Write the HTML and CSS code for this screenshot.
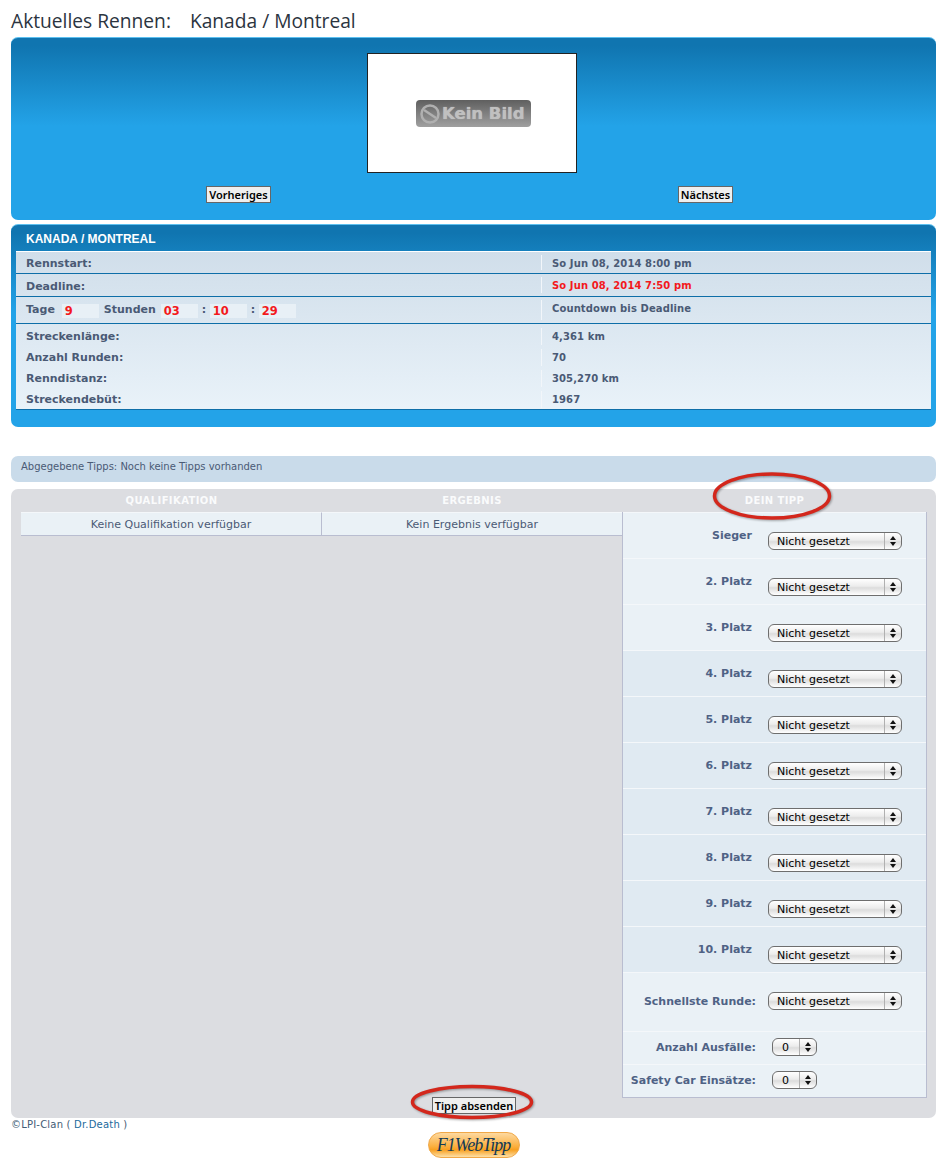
FILE: index.html
```html
<!DOCTYPE html>
<html>
    <head>
        <meta charset="utf-8">
        <title>Aktuelles Rennen</title>
        <link rel="stylesheet" href="styles.css">
    </head>
    <body>
        <h1 class="title"><span>Aktuelles Rennen:</span><span>Kanada / Montreal</span></h1>

        <div class="panel pic_panel">
            <div class="pic_box">
                <div class="no_pic">
                    <svg width="22" height="22" viewBox="0 0 22 22">
                        <circle cx="11" cy="11" r="8.5" fill="none" stroke="#b0b0b0" stroke-width="2.5"/>
                        <path d="M5 7 L17 15" stroke="#b0b0b0" stroke-width="2.5"/>
                    </svg>
                    <span>Kein Bild</span>
                </div>
            </div>
            <div class="pic_nav">
                <div><button class="btn">Vorheriges</button></div>
                <div><button class="btn">Nächstes</button></div>
            </div>
        </div>

        <div class="panel info_panel">
            <div class="info_head">KANADA / MONTREAL</div>
            <div class="info_table">
                <div class="row main h22">
                    <div class="lbl">Rennstart:</div>
                    <div class="val">So Jun 08, 2014 8:00 pm</div>
                </div>
                <div class="row main h23">
                    <div class="lbl">Deadline:</div>
                    <div class="val red">So Jun 08, 2014 7:50 pm</div>
                </div>
                <div class="row main h27">
                    <div class="lbl count">
                        <span>Tage</span><b class="num">9</b>
                        <span class="gap">Stunden</span><b class="num">03</b>
                        <span class="sep">:</span><b class="num">10</b>
                        <span class="sep">:</span><b class="num">29</b>
                    </div>
                    <div class="val">Countdown bis Deadline</div>
                </div>
                <div class="facts">
                    <div class="row">
                        <div class="lbl">Streckenlänge:</div>
                        <div class="val">4,361 km</div>
                    </div>
                    <div class="row">
                        <div class="lbl">Anzahl Runden:</div>
                        <div class="val">70</div>
                    </div>
                    <div class="row">
                        <div class="lbl">Renndistanz:</div>
                        <div class="val">305,270 km</div>
                    </div>
                    <div class="row">
                        <div class="lbl">Streckendebüt:</div>
                        <div class="val">1967</div>
                    </div>
                </div>
            </div>
        </div>

        <div class="tips_bar">Abgegebene Tipps: Noch keine Tipps vorhanden</div>

        <div class="tip_panel">
            <div class="tip_grid">
                <div class="col_head">QUALIFIKATION</div>
                <div class="col_head">ERGEBNIS</div>
                <div class="col_head">DEIN TIPP</div>
                <div class="cell">Keine Qualifikation verfügbar</div>
                <div class="cell cell2">Kein Ergebnis verfügbar</div>
                <div class="tip_col">
                    <div class="tip_row"><label>Sieger</label><span class="sel"><select><option>Nicht gesetzt</option></select></span></div>
                    <div class="tip_row"><label>2. Platz</label><span class="sel"><select><option>Nicht gesetzt</option></select></span></div>
                    <div class="tip_row"><label>3. Platz</label><span class="sel"><select><option>Nicht gesetzt</option></select></span></div>
                    <div class="tip_row dark"><label>4. Platz</label><span class="sel"><select><option>Nicht gesetzt</option></select></span></div>
                    <div class="tip_row dark"><label>5. Platz</label><span class="sel"><select><option>Nicht gesetzt</option></select></span></div>
                    <div class="tip_row dark"><label>6. Platz</label><span class="sel"><select><option>Nicht gesetzt</option></select></span></div>
                    <div class="tip_row dark"><label>7. Platz</label><span class="sel"><select><option>Nicht gesetzt</option></select></span></div>
                    <div class="tip_row dark"><label>8. Platz</label><span class="sel"><select><option>Nicht gesetzt</option></select></span></div>
                    <div class="tip_row dark"><label>9. Platz</label><span class="sel"><select><option>Nicht gesetzt</option></select></span></div>
                    <div class="tip_row dark"><label>10. Platz</label><span class="sel"><select><option>Nicht gesetzt</option></select></span></div>
                    <div class="tip_row extra fast"><label>Schnellste Runde:</label><span class="sel"><select><option>Nicht gesetzt</option></select></span></div>
                    <div class="tip_row extra small"><label>Anzahl Ausfälle:</label><span class="sel num_sel"><select><option>0</option></select></span></div>
                    <div class="tip_row extra small"><label>Safety Car Einsätze:</label><span class="sel num_sel"><select><option>0</option></select></span></div>
                </div>
            </div>
            <div class="submit_row"><button class="btn">Tipp absenden</button></div>

            <!-- red marks drawn over the page -->
            <svg class="mark mark_tipp" width="124" height="52" viewBox="0 0 124 52">
                <ellipse cx="62" cy="26" rx="57.5" ry="22" fill="none" stroke="#d3271c" stroke-width="3.5"/>
            </svg>
            <svg class="mark mark_send" width="126" height="40" viewBox="0 0 126 40">
                <ellipse cx="63" cy="20" rx="59.5" ry="15.5" fill="none" stroke="#d3271c" stroke-width="3.5"/>
            </svg>
        </div>

        <div class="copy">©LPI-Clan ( <a href="#">Dr.Death</a> )</div>
        <div class="logo_row"><div class="logo">F1WebTipp</div></div>
    </body>
</html>
```

FILE: styles.css
```css
html, body {
    margin: 0;
    padding: 0;
}

body {
    padding: 0 8px 0 11px;
    background-color: #fff;
    font-family: "DejaVu Sans", sans-serif;
    font-size: 11px;
    color: #4a5a75;
}

.title {
    margin: 0;
    height: 37px;
    line-height: 41px;
    font-family: "Open Sans", sans-serif;
    font-size: 19.2px;
    font-weight: 500;
    color: #2b3440;
}

.title span + span {
    margin-left: 19px;
}

.panel {
    border-top: 1px solid #5cc0f0;
    border-radius: 7px;
    box-sizing: border-box;
    background: linear-gradient(#1075b0 0, #1075b0 8px, #23a3e8 88px);
}

.pic_panel {
    height: 183px;
    padding-top: 15px;
}

.pic_box {
    box-sizing: border-box;
    width: 210px;
    height: 120px;
    margin-left: 356px;
    padding-left: 48px;
    padding-top: 46px;
    background-color: #fff;
    border: 1px solid #222;
}

.no_pic {
    display: flex;
    align-items: center;
    gap: 1px;
    box-sizing: border-box;
    width: 115px;
    height: 27px;
    padding-left: 3px;
    border-radius: 4px;
    background: linear-gradient(#5f5f5f, #a0a0a0);
    font-size: 16.5px;
    font-weight: bold;
    color: #c0c0c0;
    text-shadow: 0 0 1px #c0c0c0;
    white-space: nowrap;
}

.pic_nav {
    display: grid;
    grid-template-columns: 455px 455px;
    gap: 12px;
    margin-top: 13px;
    text-align: center;
}

.btn {
    height: 17px;
    padding: 0 2px;
    border: 1px solid #666;
    border-radius: 0;
    background-color: #efefef;
    font-family: "Noto Sans", sans-serif;
    font-size: 11px;
    font-weight: 600;
    line-height: 14px;
    color: #000;
}

.info_panel {
    height: 203px;
    margin-top: 4px;
    padding: 0 5px;
}

.info_head {
    height: 26px;
    padding-left: 10px;
    line-height: 29px;
    font-family: "Liberation Sans", sans-serif;
    font-size: 12px;
    font-weight: bold;
    color: #fff;
}

.info_table {
    border-top: 1px solid #fff;
    border-bottom: 1px solid #0e6ea8;
    background: linear-gradient(#d0deea, #e9f2f9);
}

.row {
    display: flex;
    height: 21px;
    font-weight: bold;
    line-height: 21px;
}

.row .lbl {
    box-sizing: border-box;
    width: 525px;
    padding-left: 10px;
    white-space: nowrap;
}

.row .val {
    flex: 1;
    margin: 2px 0;
    padding-left: 10px;
    border-left: 1px solid #f2f6fa;
    font-size: 10px;
    letter-spacing: 0.1px;
    line-height: 17px;
}

.main {
    box-sizing: border-box;
    border-bottom: 1px solid #0e6ea8;
}

.h22 {
    height: 22px;
}

.h23 {
    height: 23px;
}

.h27 {
    height: 27px;
}

.main .val {
    margin: 3px 0;
}

.red {
    color: #f3191c;
}

.main .lbl {
    line-height: 23px;
}

.h23 .lbl,
.h27 .lbl {
    padding-top: 1px;
}

.count {
    display: flex;
    align-items: center;
    height: 24px;
}

.count .num {
    box-sizing: border-box;
    width: 37px;
    height: 14px;
    margin-top: 3px;
    margin-left: 7px;
    padding-left: 3px;
    background-color: #e8f0f6;
    font-size: 11.5px;
    line-height: 15px;
    color: #f3191c;
}

.count .gap {
    margin-left: 5px;
}

.count .gap + .num {
    margin-left: 5px;
}

.count .sep {
    width: 12px;
    text-align: center;
}

.count .sep + .num {
    margin-left: 0;
}

.facts {
    box-sizing: border-box;
    height: 85px;
    padding-top: 2px;
}

.tips_bar {
    box-sizing: border-box;
    height: 26px;
    margin-top: 29px;
    padding-left: 10px;
    border-radius: 7px;
    background-color: #c9dbea;
    font-size: 10px;
    line-height: 22px;
}

.tip_panel {
    position: relative;
    box-sizing: border-box;
    height: 629px;
    margin-top: 7px;
    padding: 0 9px 0 10px;
    border-radius: 7px;
    background-color: #dcdde1;
}

.tip_grid {
    display: grid;
    grid-template-columns: 301px 300px 305px;
    grid-template-rows: 23px auto;
}

.col_head {
    text-align: center;
    font-size: 10px;
    font-weight: bold;
    letter-spacing: 0.4px;
    line-height: 23px;
    color: #fafbfc;
}

.cell {
    box-sizing: border-box;
    height: 24px;
    border-top: 1px solid #f4f7fa;
    border-bottom: 1px solid #b9bdd0;
    border-right: 1px solid #b9bdd0;
    background-color: #eaf1f6;
    text-align: center;
    font-size: 11px;
    line-height: 23px;
}

.cell2 {
    border-right: 0;
}

.tip_col {
    border-left: 1px solid #b9bdd0;
    border-right: 1px solid #b9bdd0;
    border-bottom: 1px solid #b9bdd0;
}

.tip_row {
    display: flex;
    justify-content: flex-end;
    box-sizing: border-box;
    height: 46px;
    padding: 19px 24px 0 0;
    border-top: 1px solid #f4f7fa;
    background-color: #eaf1f6;
    font-weight: bold;
}

.tip_row.dark {
    background-color: #e0eaf2;
}

.tip_row label {
    margin: -3px 16px 0 0;
    color: #4f6285;
    white-space: nowrap;
}

.tip_row.extra {
    align-items: center;
    padding-top: 0;
    padding-bottom: 2px;
}

.tip_row.extra label {
    margin: 0 12px 0 0;
}

.fast {
    height: 59px;
}

.small {
    height: 33px;
    padding-right: 109px;
}

.tip_row.small label {
    margin-right: 16px;
}

.sel {
    position: relative;
    display: block;
    width: 134px;
    height: 18px;
}

.sel.num_sel {
    width: 45px;
}

.sel select {
    -webkit-appearance: none;
    appearance: none;
    box-sizing: border-box;
    display: block;
    width: 100%;
    height: 18px;
    padding: 0 0 0 8px;
    border: 1px solid #6e6e6e;
    border-radius: 6px;
    background: linear-gradient(90deg, transparent 0, transparent 115px, #b0b0b0 115px, #b0b0b0 116px, transparent 116px), linear-gradient(#fff, #ececec 45%, #dcdcdc 55%, #fff);
    font-family: "DejaVu Sans", sans-serif;
    font-size: 11px;
    color: #000;
}

.sel.num_sel select {
    padding-left: 9px;
    background: linear-gradient(90deg, transparent 0, transparent 26px, #b0b0b0 26px, #b0b0b0 27px, transparent 27px), linear-gradient(#fff, #ececec 45%, #dcdcdc 55%, #fff);
}

/* little up and down arrows on the select */
.sel::before,
.sel::after {
    content: "";
    position: absolute;
    right: 6px;
    border-left: 3px solid transparent;
    border-right: 3px solid transparent;
    pointer-events: none;
}

.sel::before {
    top: 4px;
    border-bottom: 4px solid #111;
}

.sel::after {
    top: 10px;
    border-top: 4px solid #111;
}

.submit_row {
    margin-top: -1px;
    text-align: center;
}

.mark {
    position: absolute;
    pointer-events: none;
    filter: drop-shadow(1px 1px 1px rgba(0, 0, 0, 0.35));
}

.mark_tipp {
    left: 699px;
    top: -19px;
}

.mark_send {
    left: 398px;
    top: 593px;
}

.copy {
    height: 13px;
    margin-top: 1px;
    font-size: 10px;
    letter-spacing: 0.2px;
    line-height: 12px;
    color: #3f5c75;
}

.copy a {
    color: #1b6a9c;
    text-decoration: none;
}

.logo_row {
    display: flex;
    justify-content: center;
}

.logo {
    box-sizing: border-box;
    width: 92px;
    height: 26px;
    border: 1px solid #f0a848;
    border-radius: 13px;
    background: linear-gradient(#fdd9a0, #fbb040 55%, #f8a020 70%, #fde0a8);
    text-align: center;
    font-family: "Liberation Serif", serif;
    font-size: 18px;
    font-style: italic;
    letter-spacing: -1px;
    line-height: 25px;
    color: #123a55;
}
```
